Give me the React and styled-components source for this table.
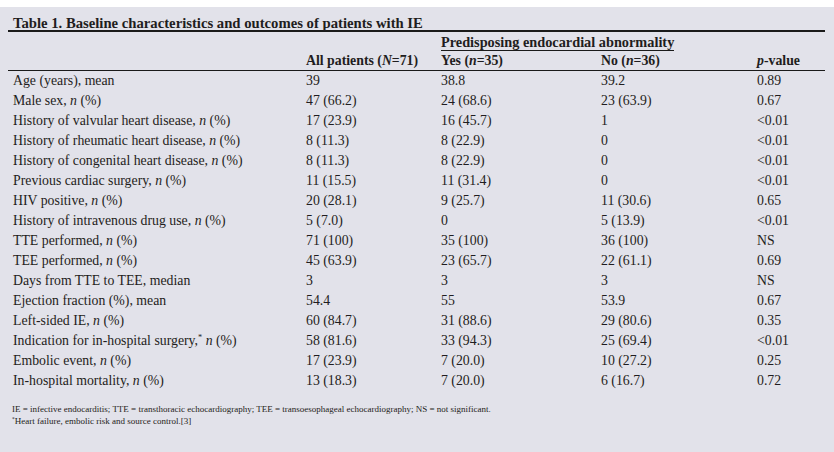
import styled, { createGlobalStyle } from "styled-components";

const GlobalStyle = createGlobalStyle`
   html, body {
      margin: 0;
      padding: 0;
      background: #ffffff;
   }
   body {
      font-family: "Liberation Serif", "DejaVu Serif", serif;
      color: #1f1d20;
   }
`;

const Panel = styled.div`
   margin-top: 7px;
   min-height: 445px;
   background: #e2e2ea;
   padding: 0 9px 0 8px;
   box-sizing: border-box;
`;

const Title = styled.h1`
   margin: 0;
   height: 25px;
   box-sizing: border-box;
   padding: 7px 0 0 5px;
   font-size: 14.7px;
   line-height: 18px;
   font-weight: bold;
   border-bottom: 2px solid #1a1a1a;
`;

const Table = styled.table`
   width: 100%;
   border-collapse: separate;
   border-spacing: 0;
   table-layout: fixed;
   font-size: 13.8px;
`;

const GroupCell = styled.th`
   height: 20px;
   padding: 2px 0 0 0;
   box-sizing: border-box;
   vertical-align: top;
   text-align: left;
   font-weight: bold;
   font-size: 14.3px;
`;

const GroupLabel = styled.span`
   display: inline-block;
   line-height: 16px;
   border-bottom: 1px solid #1a1a1a;
   white-space: nowrap;
`;

const HeadCell = styled.th`
   height: 18px;
   padding: 0 0 0 ${(p) => (p.$first ? "5px" : "0")};
   line-height: 18px;
   text-align: left;
   font-weight: bold;
   white-space: nowrap;
   border-bottom: 1px solid #1a1a1a;
`;

const Cell = styled.td`
   height: 20px;
   padding: 0 0 0 ${(p) => (p.$first ? "5px" : "0")};
   line-height: 20px;
   white-space: nowrap;
`;

const Footnotes = styled.div`
   margin-top: 13px;
   padding-left: 4px;
   font-size: 9px;
   line-height: 11.5px;
`;

const Sup = styled.sup`
   font-size: 0.6em;
   vertical-align: 0.55em;
   line-height: 0;
`;

const n = <i>n</i>;
const pct = (label) => (
   <>
      {label}, {n} (%)
   </>
);

const rows = [
   ["Age (years), mean", "39", "38.8", "39.2", "0.89"],
   [pct("Male sex"), "47 (66.2)", "24 (68.6)", "23 (63.9)", "0.67"],
   [pct("History of valvular heart disease"), "17 (23.9)", "16 (45.7)", "1", "<0.01"],
   [pct("History of rheumatic heart disease"), "8 (11.3)", "8 (22.9)", "0", "<0.01"],
   [pct("History of congenital heart disease"), "8 (11.3)", "8 (22.9)", "0", "<0.01"],
   [pct("Previous cardiac surgery"), "11 (15.5)", "11 (31.4)", "0", "<0.01"],
   [pct("HIV positive"), "20 (28.1)", "9 (25.7)", "11 (30.6)", "0.65"],
   [pct("History of intravenous drug use"), "5 (7.0)", "0", "5 (13.9)", "<0.01"],
   [pct("TTE performed"), "71 (100)", "35 (100)", "36 (100)", "NS"],
   [pct("TEE performed"), "45 (63.9)", "23 (65.7)", "22 (61.1)", "0.69"],
   ["Days from TTE to TEE, median", "3", "3", "3", "NS"],
   ["Ejection fraction (%), mean", "54.4", "55", "53.9", "0.67"],
   [pct("Left-sided IE"), "60 (84.7)", "31 (88.6)", "29 (80.6)", "0.35"],
   [
      <>
         Indication for in-hospital surgery,<Sup>*</Sup> {n} (%)
      </>,
      "58 (81.6)",
      "33 (94.3)",
      "25 (69.4)",
      "<0.01",
   ],
   [pct("Embolic event"), "17 (23.9)", "7 (20.0)", "10 (27.2)", "0.25"],
   [pct("In-hospital mortality"), "13 (18.3)", "7 (20.0)", "6 (16.7)", "0.72"],
];

export default function App() {
   return (
      <>
         <GlobalStyle />
         <Panel>
            <Title>Table 1. Baseline characteristics and outcomes of patients with IE</Title>
            <Table>
               <colgroup>
                  <col style={{ width: 298 }} />
                  <col style={{ width: 135 }} />
                  <col style={{ width: 160 }} />
                  <col style={{ width: 156 }} />
                  <col />
               </colgroup>
               <thead>
                  <tr>
                     <GroupCell />
                     <GroupCell />
                     <GroupCell colSpan={2}>
                        <GroupLabel>Predisposing endocardial abnormality</GroupLabel>
                     </GroupCell>
                     <GroupCell />
                  </tr>
                  <tr>
                     <HeadCell $first />
                     <HeadCell>
                        All patients (<i>N</i>=71)
                     </HeadCell>
                     <HeadCell>
                        Yes (<i>n</i>=35)
                     </HeadCell>
                     <HeadCell>
                        No (<i>n</i>=36)
                     </HeadCell>
                     <HeadCell>
                        <i>p</i>-value
                     </HeadCell>
                  </tr>
               </thead>
               <tbody>
                  {rows.map((r, i) => (
                     <tr key={i}>
                        {r.map((c, j) => (
                           <Cell key={j} $first={j === 0}>
                              {c}
                           </Cell>
                        ))}
                     </tr>
                  ))}
               </tbody>
            </Table>
            <Footnotes>
               IE = infective endocarditis; TTE = transthoracic echocardiography; TEE = transoesophageal
               echocardiography; NS = not significant.
               <br />
               <Sup>*</Sup>Heart failure, embolic risk and source control.[3]
            </Footnotes>
         </Panel>
      </>
   );
}
